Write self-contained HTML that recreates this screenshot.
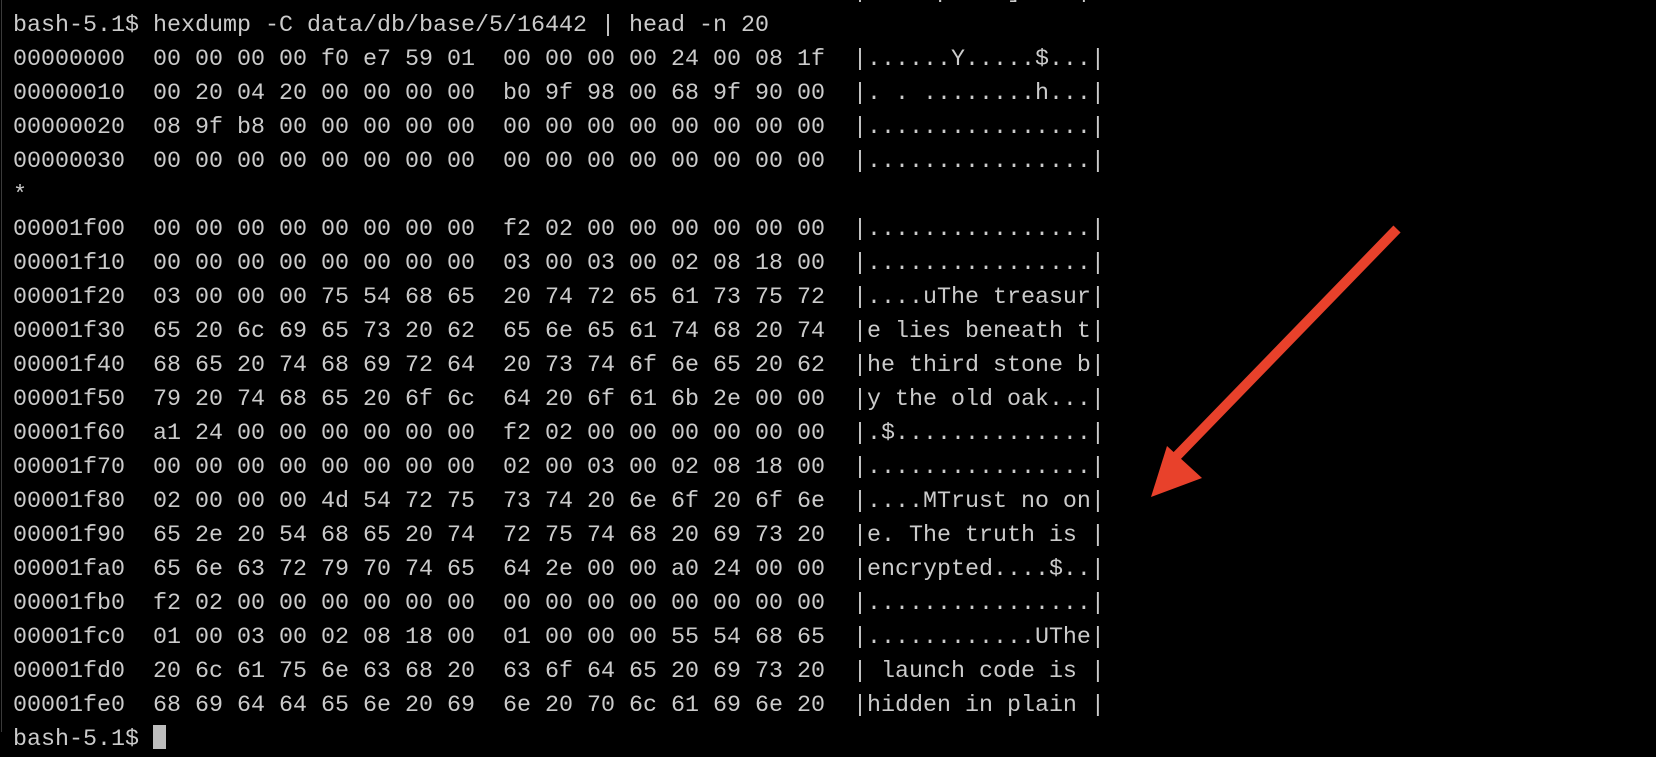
<!DOCTYPE html>
<html><head><meta charset="utf-8"><style>
html,body{margin:0;padding:0;background:#000;width:1656px;height:732px;overflow:hidden}
.t{position:absolute;left:13px;top:-25px;font-family:"Liberation Mono",monospace;font-size:23.33px;line-height:34px;color:#cbcbcb;white-space:pre}
.cur{display:inline-block;width:13px;height:24px;background:#bdbdbd;vertical-align:-4px}
.edge{position:absolute;left:1px;top:0;width:1px;height:732px;background:#3a3a3a}
svg{position:absolute;left:0;top:0}
</style></head><body>
<div class="edge"></div>
<div class="t">00001130  00 00 00 00 00 00 00 00  00 00 00 00 00 00 00 00  |....upd_..]....|
bash-5.1$ hexdump -C data/db/base/5/16442 | head -n 20
00000000  00 00 00 00 f0 e7 59 01  00 00 00 00 24 00 08 1f  |......Y.....$...|
00000010  00 20 04 20 00 00 00 00  b0 9f 98 00 68 9f 90 00  |. . ........h...|
00000020  08 9f b8 00 00 00 00 00  00 00 00 00 00 00 00 00  |................|
00000030  00 00 00 00 00 00 00 00  00 00 00 00 00 00 00 00  |................|
*
00001f00  00 00 00 00 00 00 00 00  f2 02 00 00 00 00 00 00  |................|
00001f10  00 00 00 00 00 00 00 00  03 00 03 00 02 08 18 00  |................|
00001f20  03 00 00 00 75 54 68 65  20 74 72 65 61 73 75 72  |....uThe treasur|
00001f30  65 20 6c 69 65 73 20 62  65 6e 65 61 74 68 20 74  |e lies beneath t|
00001f40  68 65 20 74 68 69 72 64  20 73 74 6f 6e 65 20 62  |he third stone b|
00001f50  79 20 74 68 65 20 6f 6c  64 20 6f 61 6b 2e 00 00  |y the old oak...|
00001f60  a1 24 00 00 00 00 00 00  f2 02 00 00 00 00 00 00  |.$..............|
00001f70  00 00 00 00 00 00 00 00  02 00 03 00 02 08 18 00  |................|
00001f80  02 00 00 00 4d 54 72 75  73 74 20 6e 6f 20 6f 6e  |....MTrust no on|
00001f90  65 2e 20 54 68 65 20 74  72 75 74 68 20 69 73 20  |e. The truth is |
00001fa0  65 6e 63 72 79 70 74 65  64 2e 00 00 a0 24 00 00  |encrypted....$..|
00001fb0  f2 02 00 00 00 00 00 00  00 00 00 00 00 00 00 00  |................|
00001fc0  01 00 03 00 02 08 18 00  01 00 00 00 55 54 68 65  |............UThe|
00001fd0  20 6c 61 75 6e 63 68 20  63 6f 64 65 20 69 73 20  | launch code is |
00001fe0  68 69 64 64 65 6e 20 69  6e 20 70 6c 61 69 6e 20  |hidden in plain |
bash-5.1$ <span class="cur"></span></div>
<svg width="1656" height="732">
<line x1="1397" y1="229" x2="1170" y2="463" stroke="#e8412b" stroke-width="10"/>
<polygon points="1151,497 1167,446 1202,478" fill="#e8412b"/>
</svg>
</body></html>
